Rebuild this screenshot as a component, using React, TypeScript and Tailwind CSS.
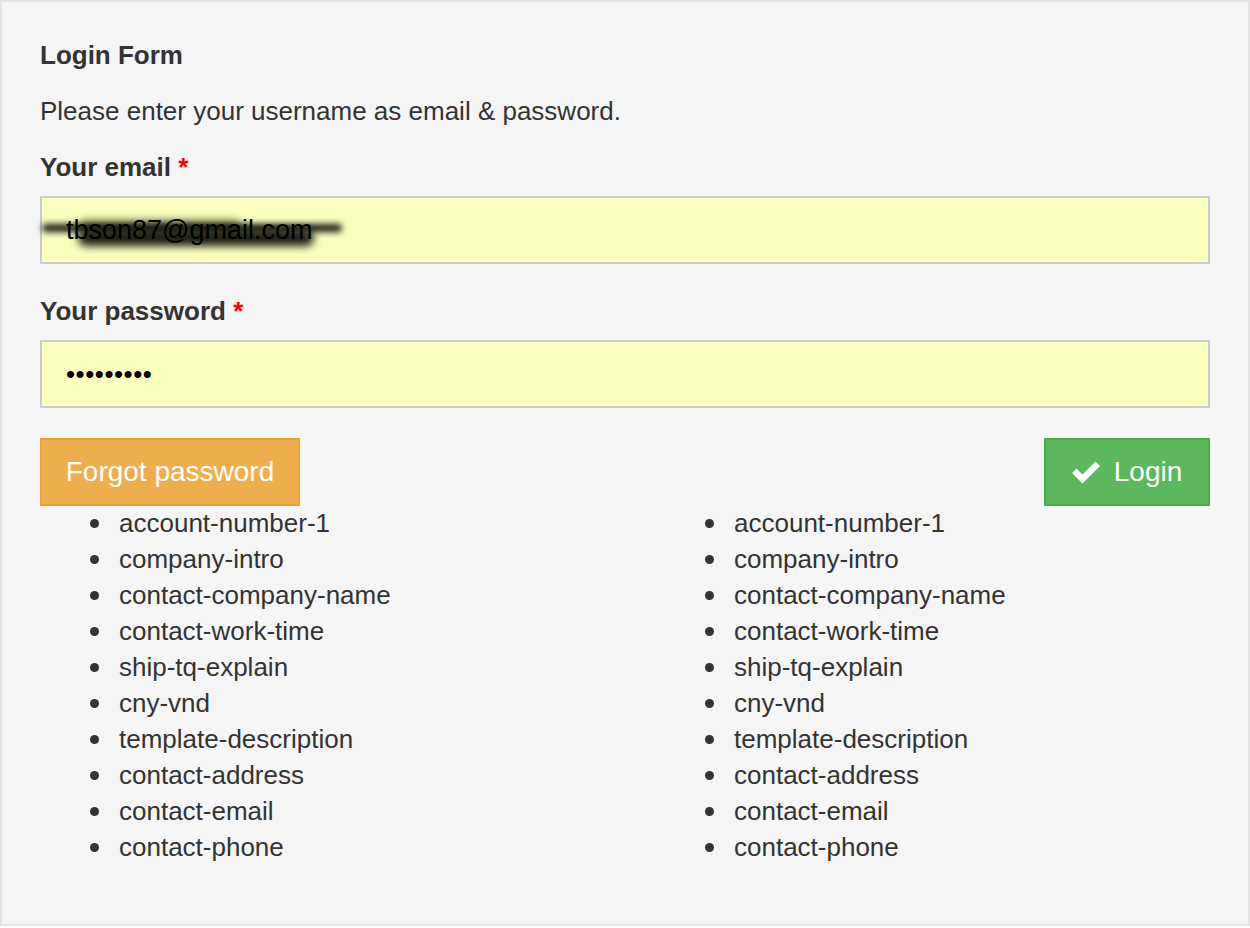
const items = [
  "account-number-1",
  "company-intro",
  "contact-company-name",
  "contact-work-time",
  "ship-tq-explain",
  "cny-vnd",
  "template-description",
  "contact-address",
  "contact-email",
  "contact-phone",
];

function KeyList() {
  return (
    <ul className="flex flex-col">
      {items.map((k) => (
        <li key={k} className="flex h-[36px] items-center">
          <span className="ml-[50px] mr-[20px] h-[9px] w-[9px] rounded-full bg-[#333]" />
          <span>{k}</span>
        </li>
      ))}
    </ul>
  );
}

function Label({ text }: { text: string }) {
  return (
    <label className="block font-bold leading-[36px]">
      {text} <span className="text-[#f00]">*</span>
    </label>
  );
}

function CheckIcon() {
  return (
    <svg width="28" height="24" viewBox="0 0 28 24" className="mr-[14px]">
      <polygon points="0,13 4.5,8.5 10.5,14.5 23.5,1.5 28,6 10.5,23.5" fill="#fff" />
    </svg>
  );
}

export default function App() {
  return (
    <div
      className="h-[926px] w-[1250px] border-2 border-[#e3e3e3] bg-[#f5f5f5] px-[38px] pt-[35px] text-[26px] text-[#333]"
      style={{ fontFamily: '"Liberation Sans", Arial, sans-serif' }}
    >
      <h3 className="font-bold leading-[36px]">Login Form</h3>
      <p className="mt-[20px] leading-[36px]">Please enter your username as email &amp; password.</p>

      <div className="mt-[20px]">
        <Label text="Your email" />
        <div className="relative mt-[11px]">
          <input
            readOnly
            value="tbson87@gmail.com"
            className="block h-[68px] w-full border-2 border-[#ccc] bg-[#faffbd] px-[24px] text-[27px] text-black outline-none"
          />
          {/* scribble over the address */}
          <div className="pointer-events-none absolute left-[2px] top-[28px] h-[8px] w-[300px] rounded-full bg-black/90 blur-[3px]" />
          <div className="pointer-events-none absolute left-[38px] top-[34px] h-[16px] w-[236px] rounded-full bg-black/90 blur-[4px]" />
          <div className="pointer-events-none absolute left-[40px] top-[24px] h-[10px] w-[160px] rounded-full bg-black/50 blur-[4px]" />
        </div>
      </div>

      <div className="mt-[29px]">
        <Label text="Your password" />
        <input
          readOnly
          type="password"
          value="123456789"
          className="mt-[11px] block h-[68px] w-full border-2 border-[#ccc] bg-[#faffbd] px-[24px] tracking-[0.5px] text-black outline-none"
        />
      </div>

      <div className="mt-[30px] flex justify-between text-[28px]">
        <button className="flex h-[68px] w-[260px] items-center justify-center border-2 border-[#eea236] bg-[#f0ad4e] text-white">
          Forgot password
        </button>
        <button className="flex h-[68px] w-[166px] items-center justify-center border-2 border-[#4cae4c] bg-[#5cb85c] text-white">
          <CheckIcon />
          Login
        </button>
      </div>

      <div className="-mt-[1px] grid grid-cols-2 gap-[60px]">
        <KeyList />
        <KeyList />
      </div>
    </div>
  );
}
